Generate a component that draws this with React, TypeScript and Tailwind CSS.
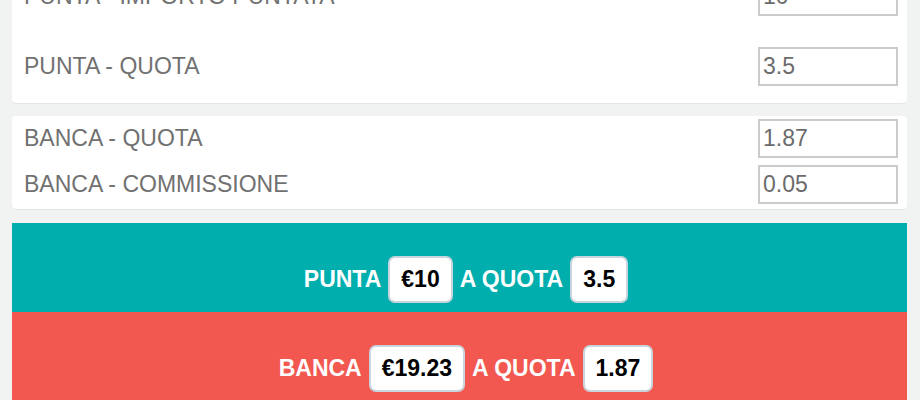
import React from "react";

type Field = { label: string; value: string };

const PUNTA: Field[] = [
  { label: "PUNTA - IMPORTO PUNTATA", value: "10" },
  { label: "PUNTA - QUOTA", value: "3.5" },
];

const BANCA: Field[] = [
  { label: "BANCA - QUOTA", value: "1.87" },
  { label: "BANCA - COMMISSIONE", value: "0.05" },
];

const Row = ({ field }: { field: Field }) => (
  <div className="flex items-center justify-between">
    <span className="text-[23px] leading-none text-[#717171]">{field.label}</span>
    <input
      readOnly
      value={field.value}
      className="h-[39px] w-[140px] border-2 border-[#cbcbcb] bg-white px-[3px] text-[23px] text-[#6b6b6b] outline-none"
    />
  </div>
);

const Chip = ({ children }: { children: React.ReactNode }) => (
  <span className="flex h-[47px] items-center rounded-[7px] border-2 border-[#c9d4dd] bg-white px-[11px] text-black">
    {children}
  </span>
);

const Band = ({
  color,
  label,
  amount,
  odds,
}: {
  color: string;
  label: string;
  amount: string;
  odds: string;
}) => (
  <div className={`flex items-center justify-center gap-[7px] pb-[9px] pl-[13px] pt-[33px] text-[23px] font-bold ${color}`}>
    <span className="text-white">{label}</span>
    <Chip>{amount}</Chip>
    <span className="text-white">A QUOTA</span>
    <Chip>{odds}</Chip>
  </div>
);

export default function App() {
  return (
    <div
      className="h-[400px] overflow-hidden bg-[#f1f2f2] pl-[12px] pr-[13px]"
      style={{ fontFamily: '"Liberation Sans", Arial, sans-serif' }}
    >
      {/* Punta */}
      <div className="-mt-[26px] flex flex-col gap-[31px] rounded-[4px] bg-white pb-[17px] pl-[12px] pr-[9px] pt-[3px] shadow-[0_1px_0_#e4e5e5]">
        {PUNTA.map((f) => (
          <Row key={f.label} field={f} />
        ))}
      </div>

      {/* Banca */}
      <div className="mt-[13px] flex flex-col gap-[7px] rounded-[4px] bg-white pb-[5px] pl-[12px] pr-[9px] pt-[3px] shadow-[0_1px_0_#e4e5e5]">
        {BANCA.map((f) => (
          <Row key={f.label} field={f} />
        ))}
      </div>

      <div className="mt-[14px]">
        <Band color="bg-[#00aeae]" label="PUNTA" amount="€10" odds="3.5" />
        <Band color="bg-[#f25750]" label="BANCA" amount="€19.23" odds="1.87" />
      </div>
    </div>
  );
}
